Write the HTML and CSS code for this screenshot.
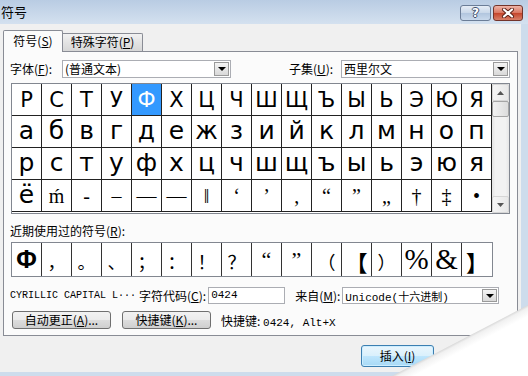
FILE: index.html
```html
<!DOCTYPE html>
<html lang="zh-CN">
<head>
  <meta charset="UTF-8" />
  <title>符号</title>
  <link rel="stylesheet" href="styles.css">
</head>
<body>
  <div class="window">
    <div class="titlebar">
      <span class="title">符号</span>
      <div class="caption-btns">
        <span class="cbtn help">?</span>
        <span class="cbtn close">
          <svg width="14" height="10" viewBox="0 0 14 10">
            <path d="M3 1.5 L11 8.5 M11 1.5 L3 8.5" stroke="#5a2018" stroke-width="4" stroke-linecap="round"/>
            <path d="M3 1.5 L11 8.5 M11 1.5 L3 8.5" stroke="#fff" stroke-width="2.2" stroke-linecap="round"/>
          </svg>
        </span>
      </div>
    </div>

    <div class="client">
      <div class="tabs">
        <div class="tab active">符号(<u>S</u>)</div>
        <div class="tab">特殊字符(<u>P</u>)</div>
      </div>

      <div class="panel">
        <div class="font-row">
          <label class="lbl">字体(<u>F</u>):</label>
          <div class="combo font-combo"><span>(普通文本)</span><span class="drop"></span></div>
          <label class="lbl subset-lbl">子集(<u>U</u>):</label>
          <div class="combo subset-combo"><span>西里尔文</span><span class="drop"></span></div>
        </div>

        <div class="charbox">
          <div class="chars">
            <span class="up">Р</span><span class="up">С</span><span class="up">Т</span><span class="up">У</span>
            <span class="up sel">Ф</span><span class="up">Х</span><span class="up">Ц</span><span class="up">Ч</span>
            <span class="up">Ш</span><span class="up">Щ</span><span class="up">Ъ</span><span class="up">Ы</span>
            <span class="up">Ь</span><span class="up">Э</span><span class="up">Ю</span><span class="up">Я</span>

            <span class="lo">а</span><span class="lo">б</span><span class="lo">в</span><span class="lo">г</span>
            <span class="lo">д</span><span class="lo">е</span><span class="lo">ж</span><span class="lo">з</span>
            <span class="lo">и</span><span class="lo">й</span><span class="lo">к</span><span class="lo">л</span>
            <span class="lo">м</span><span class="lo">н</span><span class="lo">о</span><span class="lo">п</span>

            <span class="lo">р</span><span class="lo">с</span><span class="lo">т</span><span class="lo">у</span>
            <span class="lo">ф</span><span class="lo">х</span><span class="lo">ц</span><span class="lo">ч</span>
            <span class="lo">ш</span><span class="lo">щ</span><span class="lo">ъ</span><span class="lo">ы</span>
            <span class="lo">ь</span><span class="lo">э</span><span class="lo">ю</span><span class="lo">я</span>

            <span class="lo">ё</span><span class="sf">ḿ</span><span class="sf">‐</span><span class="sf">–</span>
            <span class="sf">—</span><span class="sf">―</span><span class="sf">‖</span><span class="sf">‘</span>
            <span class="sf">’</span><span class="sf">‚</span><span class="sf">“</span><span class="sf">”</span>
            <span class="sf">„</span><span class="sf">†</span><span class="sf">‡</span><span class="sf">•</span>
          </div>
          <div class="scrollbar">
            <span class="sb-btn"><svg width="7" height="4" viewBox="0 0 7 4"><path d="M0 4 L3.5 0 L7 4Z" fill="#555"/></svg></span>
            <span class="sb-thumb"></span>
            <span class="sb-track"></span>
            <span class="sb-btn"><svg width="7" height="4" viewBox="0 0 7 4"><path d="M0 0 L3.5 4 L7 0Z" fill="#555"/></svg></span>
          </div>
        </div>

        <div class="recent-lbl">近期使用过的符号(<u>R</u>):</div>
        <div class="recent">
          <span class="phi">Φ</span><span class="cjk">，</span><span class="cjk">。</span><span class="cjk">、</span>
          <span class="cjk">；</span><span class="cjk">：</span><span class="cjk">！</span><span class="cjk">？</span>
          <span class="sf">“</span><span class="sf">”</span><span class="cjk">（</span><span class="cjk br">【</span>
          <span class="cjk">）</span><span class="big">%</span><span class="big">&amp;</span><span class="cjk br">】</span>
        </div>

        <div class="info-row">
          <span class="mono name">CYRILLIC CAPITAL L···</span>
          <label class="lbl">字符代码(<u>C</u>):</label>
          <div class="field mono">0424</div>
          <label class="lbl from-lbl">来自(<u>M</u>):</label>
          <div class="combo from-combo"><span class="mono">Unicode(十六进制)</span><span class="drop"></span></div>
        </div>

        <div class="btn-row">
          <span class="btn auto-btn">自动更正(<u>A</u>)...</span>
          <span class="btn key-btn">快捷键(<u>K</u>)...</span>
          <span class="shortcut">快捷键: <span class="mono">0424, Alt+X</span></span>
        </div>
      </div>

      <div class="footer">
        <span class="btn insert">插入(<u>I</u>)</span>
      </div>
    </div>

    <div class="curl"></div>
  </div>
</body>
</html>
```

FILE: styles.css
```css
* {
  box-sizing: border-box;
}
body {
  margin: 0;
  width: 528px;
  height: 376px;
  overflow: hidden;
  font-family: "Noto Sans CJK SC", sans-serif;
  font-size: 12px;
  color: #000;
  background: #cddcec;
}
u {
  text-decoration-thickness: 1px;
  text-underline-offset: 1px;
}
.window {
  position: relative;
  width: 528px;
  height: 376px;
}

/* title bar */
.titlebar {
  height: 24px;
  display: flex;
  justify-content: space-between;
  background: linear-gradient(#b9cce3, #d4e1ef);
  padding: 0 5px 0 1px;
}
.title {
  font-size: 13px;
  line-height: 24px;
}
.caption-btns {
  display: flex;
  gap: 2px;
  margin-top: 5px;
}
.cbtn {
  width: 31px;
  height: 16px;
  border: 1px solid #6b7d97;
  border-radius: 3px;
  display: flex;
  align-items: center;
  justify-content: center;
}
.help {
  background: linear-gradient(#e6edf6, #c8d7e9 50%, #b1c5de 51%, #c9d9ec);
  color: #fff;
  font-family: "DejaVu Sans", sans-serif;
  font-weight: bold;
  font-size: 12px;
  line-height: 14px;
  text-shadow: -1px 0 #3d4f6b, 1px 0 #3d4f6b, 0 -1px #3d4f6b, 0 1px #3d4f6b;
}
.close {
  width: 30px;
  border-color: #73342b;
  background: linear-gradient(#efb4a8, #d97560 50%, #c4432a 51%, #d8806a);
}

/* client */
.client {
  width: 521px;
  height: 348px;
  background: #f0f0f0;
  padding: 6px 3px 0 3px;
}
.tabs {
  display: flex;
  align-items: flex-end;
  height: 21px;
}
.tab {
  width: 80px;
  height: 18px;
  border: 1px solid #898c95;
  border-left: none;
  border-bottom: none;
  border-radius: 0 2px 0 0;
  background: linear-gradient(#f2f2f2, #e3e3e3 50%, #d7d7d7);
  text-align: center;
  line-height: 16px;
}
.tab.active {
  width: 60px;
  height: 22px;
  margin-bottom: -1px;
  border-left: 1px solid #898c95;
  border-radius: 2px 2px 0 0;
  background: #fbfbfb;
  position: relative;
  z-index: 1;
  line-height: 20px;
}
.panel {
  width: 515px;
  height: 285px;
  border: 1px solid #898c95;
  background: #fbfbfb;
}

/* labels and combos */
.lbl {
  white-space: nowrap;
  line-height: 16px;
}
.font-row {
  display: flex;
  align-items: center;
  height: 18px;
  margin-top: 8px;
  padding-left: 6px;
}
.font-row .lbl {
  width: 52px;
}
.font-row .subset-lbl {
  margin-left: 58px;
}
.combo {
  position: relative;
  width: 169px;
  height: 18px;
  border: 1px solid #abadb3;
  background: #fff;
  line-height: 16px;
  padding-left: 2px;
  white-space: nowrap;
}
.drop {
  position: absolute;
  right: 1px;
  top: 1px;
  width: 15px;
  height: 14px;
  border: 1px solid #9a9a9a;
  background: linear-gradient(#f4f4f4, #d9d9d9);
}
.drop::after {
  content: "";
  position: absolute;
  left: 3px;
  top: 4px;
  border-left: 4px solid transparent;
  border-right: 4px solid transparent;
  border-top: 4px solid #000;
}

/* character grid */
.charbox {
  display: flex;
  width: 499px;
  height: 131px;
  margin: 5px 0 0 7px;
  border: 1px solid #828790;
  background: #fff;
}
.chars {
  display: grid;
  grid-template-columns: repeat(16, 30px);
  grid-auto-rows: 32px;
  width: 480px;
}
.chars span {
  display: flex;
  align-items: center;
  justify-content: center;
  border-right: 1px solid #222;
  border-bottom: 1px solid #222;
  font-family: "DejaVu Sans", sans-serif;
  line-height: 1;
}
.chars .up {
  font-size: 21px;
  padding-top: 2px;
}
.chars .lo {
  font-size: 25px;
  padding-bottom: 2px;
}
.chars .sf {
  font-family: "Liberation Serif", "DejaVu Serif", serif;
  font-size: 20px;
}
.chars .sel {
  background: #3399ff;
  color: #fff;
}
.scrollbar {
  display: flex;
  flex-direction: column;
  width: 17px;
  background: linear-gradient(90deg, #e3e3e3, #f2f2f2 20%, #f2f2f2 80%, #e6e6e6);
}
.sb-btn {
  height: 17px;
  display: flex;
  align-items: center;
  justify-content: center;
  border: 1px solid #d6d6d6;
  border-radius: 2px;
  background: linear-gradient(90deg, #f5f5f5, #e8e8e8);
}
.sb-thumb {
  height: 16px;
  border: 1px solid #a5a5a5;
  border-radius: 2px;
  background: linear-gradient(90deg, #f2f2f2, #dcdcdc);
}
.sb-track {
  flex: 1;
}

/* recent symbols */
.recent-lbl {
  height: 28px;
  padding: 9px 0 0 6px;
  line-height: 16px;
}
.recent {
  display: grid;
  grid-template-columns: repeat(16, 30px);
  width: 482px;
  height: 35px;
  margin-left: 7px;
  border: 1px solid #828790;
  background: #fff;
}
.recent span {
  display: flex;
  align-items: center;
  justify-content: center;
  border-right: 1px solid #333;
  line-height: 1;
}
.recent span:last-child {
  border-right: none;
}
.recent .phi {
  font-family: "Liberation Sans", sans-serif;
  font-weight: bold;
  font-size: 25px;
}
.recent .cjk {
  font-size: 18px;
  padding-top: 3px;
}
.recent .br {
  font-size: 22px;
  font-weight: bold;
}
.recent .sf {
  font-family: "Liberation Serif", serif;
  font-size: 22px;
  align-items: flex-start;
  padding-top: 6px;
}
.recent .big {
  font-family: "Liberation Serif", serif;
  font-size: 29px;
}

/* info and buttons */
.mono {
  font-family: "Liberation Mono", "Noto Sans CJK SC", monospace;
  font-size: 10px;
}
.info-row {
  display: flex;
  align-items: center;
  height: 17px;
  margin-top: 10px;
  padding-left: 6px;
}
.name {
  width: 129px;
  white-space: nowrap;
}
.field {
  width: 77px;
  height: 17px;
  margin-left: 2px;
  border: 1px solid #abadb3;
  background: #fff;
  line-height: 15px;
  padding-left: 2px;
  font-size: 11px;
}
.from-lbl {
  margin-left: 10px;
}
.from-combo {
  width: 157px;
  height: 17px;
  margin-left: 2px;
  line-height: 15px;
}
.from-combo .mono {
  font-size: 11px;
}
.from-combo .drop {
  height: 13px;
}
.btn-row {
  display: flex;
  align-items: center;
  height: 18px;
  margin-top: 7px;
  padding-left: 8px;
}
.btn {
  display: flex;
  align-items: center;
  justify-content: center;
  height: 18px;
  border: 1px solid #707070;
  border-radius: 3px;
  background: linear-gradient(#f2f2f2, #ebebeb 50%, #dddddd 51%, #cfcfcf);
  white-space: nowrap;
  line-height: 16px;
}
.auto-btn {
  width: 99px;
}
.key-btn {
  width: 89px;
  margin-left: 11px;
}
.shortcut {
  margin-left: 10px;
  white-space: nowrap;
}
.shortcut .mono {
  font-size: 11px;
}

/* footer */
.footer {
  padding: 9px 0 0 358px;
}
.insert {
  width: 73px;
  height: 22px;
  border-color: #3c7fb1;
  background: linear-gradient(#eaf6fd, #d9f0fc 50%, #bee6fd 51%, #a7d9f5);
  box-shadow: inset 0 0 0 1px #cdeeff;
}

/* peeled corner */
.curl {
  position: absolute;
  left: 392px;
  top: 305px;
  width: 136px;
  height: 71px;
  clip-path: polygon(100% 0, 100% 100%, 0 100%);
  background: linear-gradient(to top left, #fff 0, #fff 42%, #f1f1f1 48%, #d8d8d8 50%);
}
```
